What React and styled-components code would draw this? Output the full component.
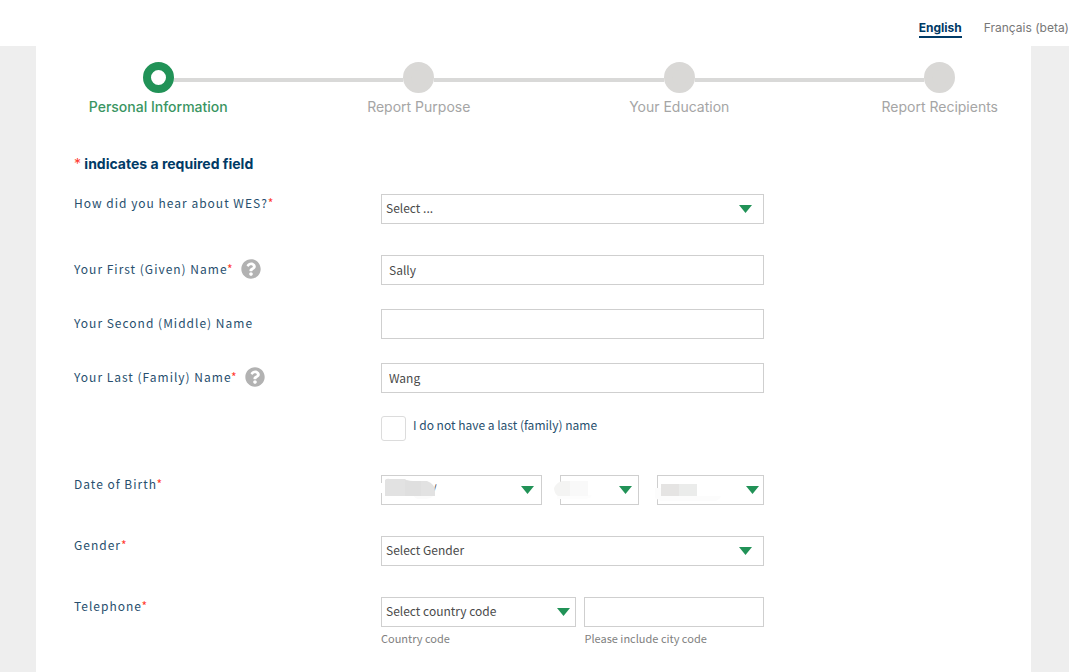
import React, { useState } from "react";
//Styling
import styled, { createGlobalStyle } from "styled-components";
import { FaQuestionCircle } from "react-icons/fa";

const steps = [
  "Personal Information",
  "Report Purpose",
  "Your Education",
  "Report Recipients",
];

const Dropdown = ({ id, label, options, inset, indent, children }) => (
  <SelectWrap>
    <StyledSelect id={id} aria-label={label} $indent={indent}>
      {options.map((o) => (
        <option key={o}>{o}</option>
      ))}
    </StyledSelect>
    {children}
    <Arrow viewBox="0 0 13 8" $inset={inset} aria-hidden="true">
      <path d="M0 0h13L6.5 8z" />
    </Arrow>
  </SelectWrap>
);

const FieldLabel = ({ htmlFor, text, required, help }) => (
  <LabelCell>
    <Label htmlFor={htmlFor}>
      {text}
      {required && <Star>*</Star>}
    </Label>
    {help && (
      <HelpButton type="button" aria-label={`Help: ${text}`}>
        <FaQuestionCircle />
      </HelpButton>
    )}
  </LabelCell>
);

const App = () => {
  //State
  const [names, setNames] = useState({ first: "Sally", middle: "", last: "Wang" });
  const [noLastName, setNoLastName] = useState(false);

  //Functions
  const updateName = (e) => {
    setNames({ ...names, [e.target.name]: e.target.value });
  };

  return (
    <Page>
      <GlobalStyle />
      <Header>
        <LangLink href="#en" $active>
          English
        </LangLink>
        <LangLink href="#fr">Français (beta)</LangLink>
      </Header>
      <Backdrop>
        <Panel>
          <Stepper>
            {steps.map((step, i) => (
              <Step key={step} $active={i === 0}>
                <Track>
                  <Line $hidden={i === 0} />
                  <Dot $active={i === 0} />
                  <Line $hidden={i === steps.length - 1} />
                </Track>
                {step}
              </Step>
            ))}
          </Stepper>

          <form>
            <RequiredNote>
              <Star>*</Star> indicates a required field
            </RequiredNote>

            <Row $gap={31}>
              <FieldLabel htmlFor="source" text="How did you hear about WES?" required />
              <Dropdown id="source" options={["Select ..."]} inset={12} />
            </Row>
            <Row $gap={24} $center>
              <FieldLabel htmlFor="first" text="Your First (Given) Name" required help />
              <TextInput id="first" name="first" value={names.first} onChange={updateName} />
            </Row>
            <Row $gap={24} $center>
              <FieldLabel htmlFor="middle" text="Your Second (Middle) Name" />
              <TextInput id="middle" name="middle" value={names.middle} onChange={updateName} />
            </Row>
            <Row $gap={23} $center>
              <FieldLabel htmlFor="last" text="Your Last (Family) Name" required help />
              <TextInput id="last" name="last" value={names.last} onChange={updateName} />
            </Row>
            <Row $gap={34}>
              <CheckLabel>
                <Checkbox
                  type="checkbox"
                  checked={noLastName}
                  onChange={(e) => setNoLastName(e.target.checked)}
                />
                I do not have a last (family) name
              </CheckLabel>
            </Row>
            <Row $gap={31}>
              <FieldLabel htmlFor="month" text="Date of Birth" required />
              <DateGroup>
                <Dropdown id="month" options={["/"]} inset={8} indent={50}>
                  <Smudge viewBox="0 0 90 30" aria-hidden="true">
                    <path fill="#fff" d="M5 8h8v10H5z" />
                    <path fill="#fbfbfb" d="M40 18h20v3q-2 3-8 3h-6q-4 0-6-4z" />
                    <path fill="#e2e2e2" d="M12 5q2-2 5-1h15q2 2 8 2h14q8 3 8 10v5H12z" />
                    <path fill="#dfdfdf" d="M32 5q4 1 8 1h8v15H32z" />
                  </Smudge>
                </Dropdown>
                <Dropdown id="day" label="Day" options={[""]} inset={7}>
                  <Smudge viewBox="0 0 90 30" aria-hidden="true">
                    <path fill="#fdfdfd" d="M5 20h35q-2 4-8 4H5z" />
                    <path fill="#f4f4f3" d="M10 6h8v15H6q-4-3-4-8 2-5 8-7z" />
                    <path fill="#f9f9f9" d="M18 6h18v15H18z" />
                  </Smudge>
                </Dropdown>
                <Dropdown id="year" label="Year" options={[""]} inset={5}>
                  <Smudge viewBox="0 0 90 30" aria-hidden="true">
                    <path fill="#fcfcfc" d="M6 13h6v8h60q-2 5-7 5H12l-6-3z" />
                    <path fill="#e5e4e3" d="M12 9h18v12H12z" />
                    <path fill="#ebeceb" d="M30 9h18v12H30z" />
                  </Smudge>
                </Dropdown>
              </DateGroup>
            </Row>
            <Row $gap={31}>
              <FieldLabel htmlFor="gender" text="Gender" required />
              <Dropdown id="gender" options={["Select Gender"]} inset={12} />
            </Row>
            <Row $gap={23}>
              <FieldLabel htmlFor="country" text="Telephone" required />
              <PhoneGroup>
                <div>
                  <Dropdown id="country" options={["Select country code"]} inset={6} />
                  <Hint htmlFor="country">Country code</Hint>
                </div>
                <div>
                  <TextInput id="phone" type="tel" />
                  <Hint htmlFor="phone">Please include city code</Hint>
                </div>
              </PhoneGroup>
            </Row>
          </form>
        </Panel>
      </Backdrop>
    </Page>
  );
};

const GlobalStyle = createGlobalStyle`
  * {
    box-sizing: border-box;
  }
  body {
    margin: 0;
    background: #ffffff;
    font-family: "Noto Sans CJK SC", "Noto Sans", sans-serif;
    font-size: 12px;
    line-height: 18px;
    color: #284f6e;
  }
`;

const Page = styled.div`
  display: flex;
  flex-direction: column;
  min-height: 100vh;
  padding-right: 11px;
`;

const Header = styled.header`
  display: flex;
  justify-content: flex-end;
  align-items: flex-end;
  gap: 22px;
  height: 46px;
  padding-bottom: 8px;
`;

const LangLink = styled.a`
  font-family: Inter, sans-serif;
  font-size: 12px;
  line-height: 16px;
  font-weight: ${(props) => (props.$active ? 700 : 400)};
  color: ${(props) => (props.$active ? "#003a66" : "#777777")};
  border-bottom: 2px solid
    ${(props) => (props.$active ? "#003a66" : "transparent")};
  text-decoration: none;
`;

const Backdrop = styled.main`
  display: flex;
  flex: 1;
  padding: 0 38px 0 36px;
  background: #eeeeee;
`;

const Panel = styled.div`
  flex: 1;
  min-width: 0;
  padding: 16px 38px 0;
  background: #ffffff;
`;

const Stepper = styled.ol`
  display: grid;
  grid-template-columns: repeat(4, 1fr);
  margin: 0 -77px 38px -46px;
  padding: 0;
  list-style: none;
`;

const Step = styled.li`
  font-family: Inter, sans-serif;
  font-size: 14px;
  line-height: 20px;
  text-align: center;
  font-weight: ${(props) => (props.$active ? 500 : 400)};
  color: ${(props) => (props.$active ? "#3a9562" : "#a5a5a5")};
`;

const Track = styled.div`
  display: flex;
  margin-bottom: 4px;
`;

const Line = styled.span`
  flex: 1;
  height: 4px;
  margin-top: 16px;
  background: ${(props) => (props.$hidden ? "transparent" : "#d9d9d8")};
`;

const Dot = styled.span`
  width: 31px;
  height: 31px;
  border-radius: 50%;
  border: 8px solid ${(props) => (props.$active ? "#219257" : "#d9d8d6")};
  background: ${(props) => (props.$active ? "#ffffff" : "#d9d8d6")};
`;

const RequiredNote = styled.p`
  margin: 0 0 21px;
  font-family: Inter, sans-serif;
  font-size: 14px;
  font-weight: 700;
  color: #003a66;
`;

const Star = styled.span`
  font-weight: 400;
  color: #ff3b30;
`;

const Row = styled.div`
  display: grid;
  grid-template-columns: 307fr 383fr 229fr;
  align-items: ${(props) => (props.$center ? "center" : "start")};
  margin-bottom: ${(props) => props.$gap}px;
`;

const LabelCell = styled.div`
  display: flex;
  align-items: center;
  height: 20px;
  padding-bottom: 2px;
`;

const Label = styled.label`
  letter-spacing: 1px;
`;

const HelpButton = styled.button`
  display: flex;
  margin: 0 0 0 7px;
  padding: 0;
  border: 0;
  background: none;
  font-size: 20px;
  color: #b2b2b2;
  cursor: pointer;
`;

const TextInput = styled.input`
  display: block;
  width: 100%;
  height: 30px;
  padding: 0 7px 2px;
  border: 1px solid #cfcfcf;
  border-radius: 0;
  background: #ffffff;
  font: inherit;
  color: #4a4a4a;
`;

const SelectWrap = styled.div`
  position: relative;
`;

const StyledSelect = styled.select`
  display: block;
  appearance: none;
  width: 100%;
  height: 30px;
  padding: 0 20px 2px ${(props) => props.$indent || 4}px;
  border: 1px solid #cfcfcf;
  border-radius: 0;
  background: #ffffff;
  font: inherit;
  color: #4a4a4a;
`;

const Arrow = styled.svg`
  position: absolute;
  top: 11px;
  right: ${(props) => props.$inset}px;
  width: 13px;
  height: 8px;
  fill: #219257;
  pointer-events: none;
`;

const Smudge = styled.svg`
  position: absolute;
  top: 0;
  left: -8px;
  width: 90px;
  height: 30px;
  pointer-events: none;
`;

const CheckLabel = styled.label`
  grid-column: 2;
  display: flex;
  gap: 7px;
`;

const Checkbox = styled.input`
  appearance: none;
  width: 25px;
  height: 25px;
  margin: 0;
  border: 1px solid #dcdcdc;
  border-radius: 3px;
  background: #ffffff;
  &:checked {
    background: #219257;
  }
`;

const DateGroup = styled.div`
  display: grid;
  grid-template-columns: 161fr 80fr 107fr;
  gap: 18px;
`;

const PhoneGroup = styled.div`
  display: grid;
  grid-template-columns: 196fr 180fr;
  gap: 8px;
`;

const Hint = styled.label`
  display: block;
  margin-top: 2px;
  font-size: 11px;
  color: #808080;
`;

export default App;
